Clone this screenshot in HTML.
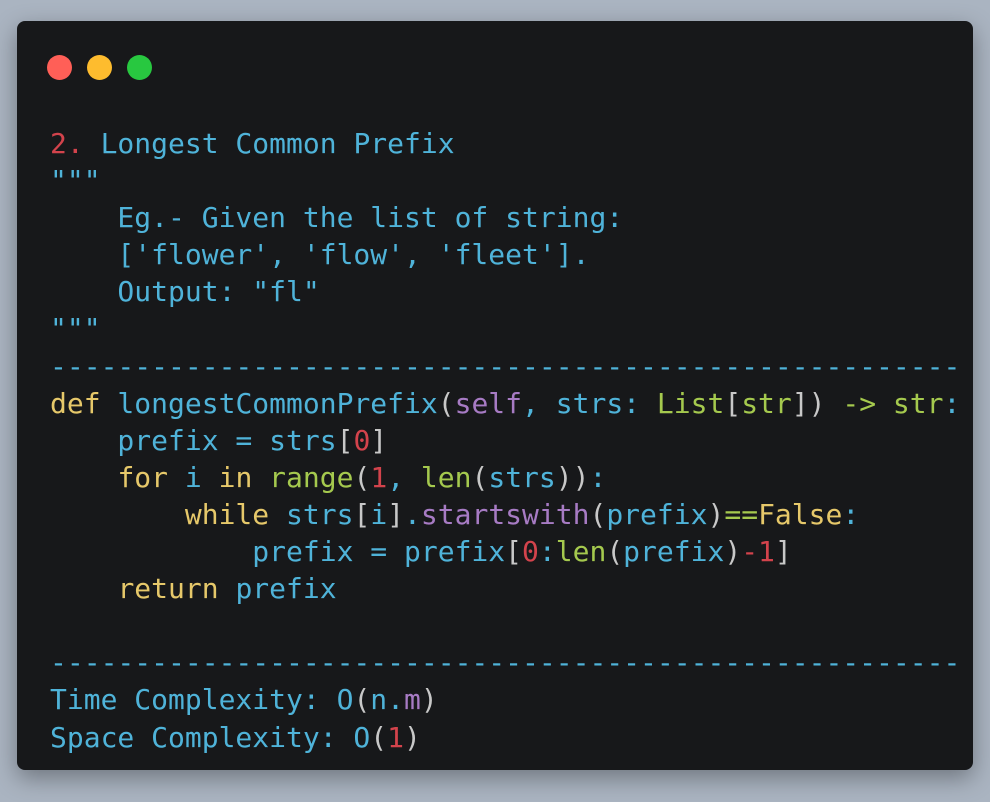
<!DOCTYPE html>
<html><head><meta charset="utf-8"><style>
html,body{margin:0;padding:0;}
body{width:990px;height:802px;background:#aab4c1;position:relative;overflow:hidden;}
.win{position:absolute;left:17px;top:21px;width:956px;height:749px;background:#17181a;border-radius:8px;box-shadow:0 8px 24px rgba(0,0,0,.35);overflow:hidden;}
.dot{position:absolute;top:34px;width:25px;height:25px;border-radius:50%;}
pre{position:absolute;left:33px;top:104px;margin:0;font-family:"DejaVu Sans Mono","Liberation Mono",monospace;font-size:28px;line-height:37.1px;color:#4fb3d9;white-space:pre;}
.r{color:#d3434c}.y{color:#e6c86a}.g{color:#a5c94e}.p{color:#a77bc4}.w{color:#c8c8c8}
</style></head><body>
<div class="win">
<div class="dot" style="left:30px;background:#ff5f57"></div>
<div class="dot" style="left:70px;background:#febc2e"></div>
<div class="dot" style="left:110px;background:#28c840"></div>
<pre><span class="r">2.</span> Longest Common Prefix
"""
    Eg.- Given the list of string:
    ['flower', 'flow', 'fleet'].
    Output: "fl"
"""
------------------------------------------------------
<span class="y">def</span> longestCommonPrefix<span class="w">(</span><span class="p">self</span>, strs: <span class="g">List</span><span class="w">[</span><span class="g">str</span><span class="w">])</span> <span class="g">-&gt;</span> <span class="g">str</span>:
    prefix = strs<span class="w">[</span><span class="r">0</span><span class="w">]</span>
    <span class="y">for</span> i <span class="y">in</span> <span class="g">range</span><span class="w">(</span><span class="r">1</span>, <span class="g">len</span><span class="w">(</span>strs<span class="w">))</span>:
        <span class="y">while</span> strs<span class="w">[</span>i<span class="w">]</span>.<span class="p">startswith</span><span class="w">(</span>prefix<span class="w">)</span><span class="g">==</span><span class="y">False</span>:
            prefix = prefix<span class="w">[</span><span class="r">0</span>:<span class="g">len</span><span class="w">(</span>prefix<span class="w">)</span><span class="r">-1</span><span class="w">]</span>
    <span class="y">return</span> prefix

------------------------------------------------------
Time Complexity: O<span class="w">(</span>n.<span class="p">m</span><span class="w">)</span>
Space Complexity: O<span class="w">(</span><span class="r">1</span><span class="w">)</span></pre>
</div>
</body></html>
